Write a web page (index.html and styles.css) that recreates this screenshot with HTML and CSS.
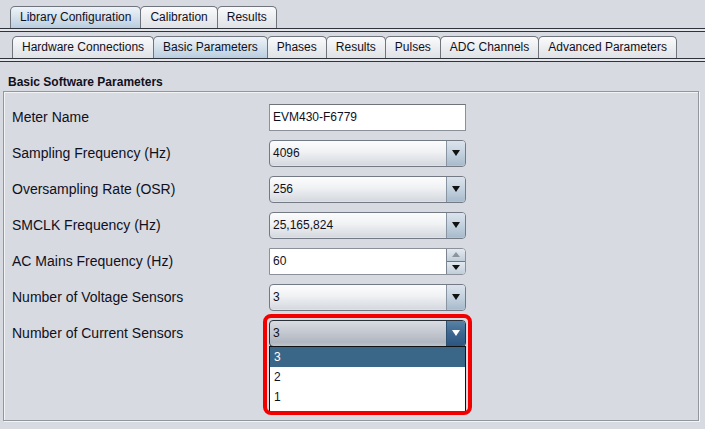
FILE: index.html
```html
<!DOCTYPE html>
<html>
<head>
<meta charset="utf-8">
<link rel="stylesheet" href="styles.css">
</head>
<body>
<div class="tabbar tabbar-top">
  <div class="tab selected">Library Configuration</div>
  <div class="tab">Calibration</div>
  <div class="tab">Results</div>
</div>
<div class="rule"></div>
<div class="pane">
  <div class="tabbar tabbar-sub">
    <div class="tab">Hardware Connections</div>
    <div class="tab selected">Basic Parameters</div>
    <div class="tab">Phases</div>
    <div class="tab">Results</div>
    <div class="tab">Pulses</div>
    <div class="tab">ADC Channels</div>
    <div class="tab">Advanced Parameters</div>
  </div>
</div>
<div class="rule"></div>
<div class="section">
  <div class="section-title">Basic Software Parameters</div>
  <div class="frame">
    <div class="row">
      <div class="label">Meter Name</div>
      <div class="field"><div class="textfield">EVM430-F6779</div></div>
    </div>
    <div class="row">
      <div class="label">Sampling Frequency (Hz)</div>
      <div class="field"><div class="combo"><span class="value">4096</span><span class="btn"><span class="tri"></span></span></div></div>
    </div>
    <div class="row">
      <div class="label">Oversampling Rate (OSR)</div>
      <div class="field"><div class="combo"><span class="value">256</span><span class="btn"><span class="tri"></span></span></div></div>
    </div>
    <div class="row">
      <div class="label">SMCLK Frequency (Hz)</div>
      <div class="field"><div class="combo"><span class="value">25,165,824</span><span class="btn"><span class="tri"></span></span></div></div>
    </div>
    <div class="row">
      <div class="label">AC Mains Frequency (Hz)</div>
      <div class="field">
        <div class="spinner">
          <span class="value">60</span>
          <span class="spin-btns">
            <span class="spin-btn"><span class="tri-up"></span></span>
            <span class="spin-btn"><span class="tri small"></span></span>
          </span>
        </div>
      </div>
    </div>
    <div class="row">
      <div class="label">Number of Voltage Sensors</div>
      <div class="field"><div class="combo"><span class="value">3</span><span class="btn"><span class="tri"></span></span></div></div>
    </div>
    <div class="row">
      <div class="label">Number of Current Sensors</div>
      <div class="field">
        <div class="combo open"><span class="value">3</span><span class="btn"><span class="tri white"></span></span></div>
        <div class="popup">
          <div class="opt sel">3</div>
          <div class="opt">2</div>
          <div class="opt">1</div>
        </div>
        <div class="highlight"></div>
      </div>
    </div>
  </div>
</div>
</body>
</html>
```

FILE: styles.css
```css
html, body {
  margin: 0;
  padding: 0;
}
body {
  background: #d7dae1;
  font-family: "Liberation Sans", Arial, sans-serif;
  color: #10101c;
  width: 705px;
  height: 429px;
  overflow: hidden;
}
.tabbar {
  display: flex;
  align-items: flex-end;
}
.tabbar-top {
  padding: 6px 0 0 10px;
}
.pane {
  padding: 4px 0 0 12px;
}
.tab {
  height: 21px;
  line-height: 21px;
  padding: 0 9px;
  font-size: 12px;
  border: 1px solid #6f747d;
  border-bottom: none;
  border-radius: 5px 5px 0 0;
  background: linear-gradient(#fbfbfc, #e9ebee 60%, #dfe2e6);
  margin-right: -1px;
  white-space: nowrap;
}
.tab.selected {
  background: linear-gradient(#eef3f8, #d2dfeb 55%, #b9cde0);
}
.rule {
  height: 2px;
  border-top: 1px solid #2f333b;
  border-bottom: 1px solid #2f333b;
  background: #e4e6ea;
}
.section {
  padding: 12px 6px 0 3px;
}
.section-title {
  font-size: 12px;
  font-weight: bold;
  padding-left: 5px;
  height: 16px;
  line-height: 16px;
}
.frame {
  margin-top: 1px;
  height: 330px;
  border: 1px solid #92969d;
  box-shadow: inset 1px 1px 0 #f2f3f5, 1px 1px 0 #f2f3f5;
  padding: 7px 0 0 8px;
  box-sizing: border-box;
}
.row {
  display: flex;
  align-items: center;
  height: 36px;
}
.label {
  width: 257px;
  font-size: 14px;
}
.field {
  position: relative;
  width: 197px;
  height: 27px;
}
.textfield {
  height: 27px;
  box-sizing: border-box;
  background: #fff;
  border: 1px solid #8c9098;
  border-top-color: #6f737a;
  font-size: 12px;
  line-height: 25px;
  padding-left: 3px;
}
.combo {
  display: flex;
  height: 27px;
  box-sizing: border-box;
  border: 1px solid #747a84;
  border-radius: 4px;
  background: linear-gradient(#fcfcfd, #eff1f3 45%, #e2e5e9 70%, #d6dae0 95%, #e4e7eb);
  font-size: 12px;
  overflow: hidden;
}
.combo .value {
  flex: 1;
  line-height: 25px;
  padding-left: 3px;
}
.btn {
  width: 18px;
  border-left: 1px solid #8894a2;
  background: linear-gradient(#dbe4ed, #c3d1de 50%, #a9bccd 95%, #b8c8d6);
  display: flex;
  align-items: center;
  justify-content: center;
}
.tri {
  width: 0;
  height: 0;
  border-left: 4px solid transparent;
  border-right: 4px solid transparent;
  border-top: 6px solid #111;
}
.tri.small {
  border-left-width: 4px;
  border-right-width: 4px;
  border-top-width: 5px;
}
.tri.white {
  border-top-color: #fff;
}
.tri-up {
  width: 0;
  height: 0;
  border-left: 4px solid transparent;
  border-right: 4px solid transparent;
  border-bottom: 5px solid #8d939b;
}
.spinner {
  display: flex;
  height: 27px;
  box-sizing: border-box;
  border: 1px solid #8c9098;
  border-radius: 0 4px 4px 0;
  background: #fff;
  font-size: 12px;
  overflow: hidden;
}
.spinner .value {
  flex: 1;
  line-height: 25px;
  padding-left: 3px;
}
.spin-btns {
  width: 18px;
  display: flex;
  flex-direction: column;
  border-left: 1px solid #7c8490;
}
.spin-btn {
  flex: 1;
  display: flex;
  align-items: center;
  justify-content: center;
  background: linear-gradient(#e3e9ef, #c0cedb);
}
.spin-btn + .spin-btn {
  border-top: 1px solid #6f7884;
}
.combo.open {
  border-color: #2a2f38;
  background: linear-gradient(#d9dce2, #c4c8d0 45%, #b0b6c0 85%, #c0c5cd);
}
.combo.open .btn {
  border-left-color: #2d4f70;
  background: linear-gradient(#5a82a6, #3c6690 50%, #2c5680);
}
.popup {
  position: absolute;
  left: 0;
  top: 26px;
  width: 197px;
  height: 66px;
  box-sizing: border-box;
  background: #fff;
  border: 1px solid #111;
  font-size: 12px;
  z-index: 2;
}
.opt {
  height: 20px;
  line-height: 20px;
  padding-left: 4px;
}
.opt.sel {
  background: #3a6787;
  color: #fff;
}
.highlight {
  position: absolute;
  left: -6px;
  top: -6px;
  width: 209px;
  height: 101px;
  box-sizing: border-box;
  border: 4px solid #f20000;
  border-radius: 8px;
  z-index: 3;
}
```
